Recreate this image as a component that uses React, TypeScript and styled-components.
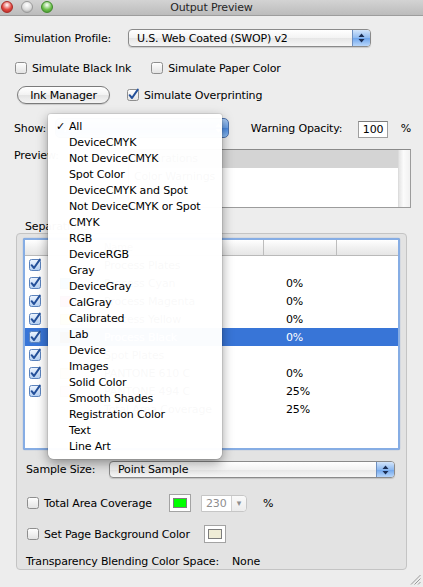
import React from "react";
import styled, { createGlobalStyle } from "styled-components";

const GlobalStyle = createGlobalStyle`
  html, body { margin: 0; padding: 0; }
  body {
    font-family: "DejaVu Sans", "Lucida Grande", sans-serif;
    font-size: 11px;
    letter-spacing: -0.15px;
    color: #000;
    background: #ededed;
  }
`;

const menuItems = [
  "All", "DeviceCMYK", "Not DeviceCMYK", "Spot Color", "DeviceCMYK and Spot",
  "Not DeviceCMYK or Spot", "CMYK", "RGB", "DeviceRGB", "Gray", "DeviceGray",
  "CalGray", "Calibrated", "Lab", "Device", "Images", "Solid Color",
  "Smooth Shades", "Registration Color", "Text", "Line Art",
];

type Plate = { name: string; swatch?: string; pct?: string; check: boolean; selected?: boolean };

const plates: Plate[] = [
  { name: "Process Plates", check: true },
  { name: "Process Cyan", swatch: "#00aeef", pct: "0%", check: true },
  { name: "Process Magenta", swatch: "#ec008c", pct: "0%", check: true },
  { name: "Process Yellow", swatch: "#fff200", pct: "0%", check: true },
  { name: "Process Black", swatch: "#231f20", pct: "0%", check: true, selected: true },
  { name: "Spot Plates", check: true },
  { name: "PANTONE 610 C", swatch: "#e1d85b", pct: "0%", check: true },
  { name: "PANTONE 494 C", swatch: "#f2afc1", pct: "25%", check: true },
  { name: "Total Area Coverage", pct: "25%", check: false },
];

const CheckBox = ({ checked, blue }: { checked?: boolean; blue?: boolean }) => (
  <svg width="12" height="12" viewBox="0 0 12 12" style={{ overflow: "visible", flex: "none" }}>
    <defs>
      <linearGradient id={blue ? "cbBlue" : "cbPlain"} x1="0" y1="0" x2="0" y2="1">
        <stop offset="0" stopColor={blue ? "#eef5ff" : "#ffffff"} />
        <stop offset="1" stopColor={blue ? "#b3cff2" : "#e2e2e2"} />
      </linearGradient>
    </defs>
    <rect
      x="0.5" y="0.5" width="11" height="11" rx="2"
      fill={`url(#${blue ? "cbBlue" : "cbPlain"})`}
      stroke={blue ? "#5b83bd" : "#8e8e8e"}
    />
    {checked && (
      <path d="M2.6 6.2 L5 9 L10.8 0.6" fill="none" stroke="#24509a" strokeWidth="2" strokeLinecap="round" strokeLinejoin="round" />
    )}
  </svg>
);

const Arrows = ({ dark }: { dark?: boolean }) => (
  <svg width="7" height="10" viewBox="0 0 7 10">
    <path d="M3.5 0.5 L6.5 4 L0.5 4 Z M0.5 6 L6.5 6 L3.5 9.5 Z" fill={dark ? "#1c2f55" : "#fff"} />
  </svg>
);

const App = () => {
  return (
    <Window>
      <GlobalStyle />
      <TitleBar>
        <Lights>
          <Light $color="#e2463f" $edge="#a82a25" />
          <Light $color="#dcdcdc" $edge="#9a9a9a" />
          <Light $color="#6cc04a" $edge="#3f8a2a" />
        </Lights>
        <Title>Output Preview</Title>
        <span />
      </TitleBar>

      <Body>
        <Row $top={13} $h={18}>
          <Label $w={114}>Simulation Profile:</Label>
          <PopUp $w={243} $h={18}>
            <PopText>U.S. Web Coated (SWOP) v2</PopText>
            <PopArrow><Arrows dark /></PopArrow>
          </PopUp>
        </Row>

        <Row $top={14} $h={14} $gap={20}>
          <CheckItem $indent={1}>
            <CheckBox />
            <span>Simulate Black Ink</span>
          </CheckItem>
          <CheckItem>
            <CheckBox />
            <span>Simulate Paper Color</span>
          </CheckItem>
        </Row>

        <Row $top={11} $h={18} $gap={17}>
          <PushButton>Ink Manager</PushButton>
          <CheckItem>
            <CheckBox checked />
            <span>Simulate Overprinting</span>
          </CheckItem>
        </Row>

        <Row $top={14} $h={20}>
          <Label $w={41}>Show:</Label>
          <BluePopUp>
            <PopText $light>All</PopText>
            <Arrows />
          </BluePopUp>
          <Label $w={107} style={{ marginLeft: 22 }}>Warning Opacity:</Label>
          <NumberField>100</NumberField>
          <Unit $left={13}>%</Unit>
        </Row>

        <PreviewRow>
          <Label $w={114}>Preview:</Label>
          <ListBox>
            <ListRows>
              <ListRow $active>Separations</ListRow>
              <ListRow>Color Warnings</ListRow>
            </ListRows>
            <ScrollTrack />
          </ListBox>
        </PreviewRow>

        <GroupTitle>Separations</GroupTitle>
        <GroupBox>
          <TableFrame>
            <TableHead>
              <HeadCell>Name</HeadCell>
              <HeadCell $sep />
              <HeadCell $sep />
            </TableHead>
            {plates.map((p) => (
              <TableRow key={p.name} $selected={p.selected}>
                <NameCell>
                  <CheckCell>{p.check && <CheckBox checked blue />}</CheckCell>
                  <SwatchCell>{p.swatch && <Swatch $color={p.swatch} />}</SwatchCell>
                  <span>{p.name}</span>
                </NameCell>
                <PctCell>{p.pct}</PctCell>
                <div />
              </TableRow>
            ))}
          </TableFrame>

          <Controls>
            <Row $top={11} $h={17}>
              <Label $w={83}>Sample Size:</Label>
              <PopUp $w={286} $h={17}>
                <PopText>Point Sample</PopText>
                <PopArrow><Arrows dark /></PopArrow>
              </PopUp>
            </Row>

            <Row $top={16} $h={18}>
              <CheckItem $indent={1} $w={142}>
                <CheckBox />
                <span>Total Area Coverage</span>
              </CheckItem>
              <ColorWell $fill="#00ff00" />
              <Combo>
                <ComboText>230</ComboText>
                <ComboButton>▾</ComboButton>
              </Combo>
              <Unit $left={16}>%</Unit>
            </Row>

            <Row $top={13} $h={18}>
              <CheckItem $indent={1} $w={177}>
                <CheckBox />
                <span>Set Page Background Color</span>
              </CheckItem>
              <ColorWell $fill="#efecd6" />
            </Row>

            <Row $top={11} $h={14}>
              <Label $w={206}>Transparency Blending Color Space:</Label>
              <span>None</span>
            </Row>
          </Controls>
        </GroupBox>
      </Body>

      <Menu>
        {menuItems.map((item, i) => (
          <MenuItem key={item}>
            {i === 0 && <Tick>✓</Tick>}
            {item}
          </MenuItem>
        ))}
      </Menu>

      <Grip width="11" height="11" viewBox="0 0 11 11">
        <path d="M10.5 1 L1 10.5 M10.5 4.5 L4.5 10.5 M10.5 8 L8 10.5" stroke="#9a9a9a" strokeWidth="1" />
      </Grip>
    </Window>
  );
};

export default App;

const Window = styled.div`
  position: relative;
  width: 423px;
  height: 587px;
  overflow: hidden;
  background: #ededed;
`;

const TitleBar = styled.div`
  height: 15px;
  display: grid;
  grid-template-columns: 1fr auto 1fr;
  align-items: center;
  background: linear-gradient(#d3d3d3, #bcbcbc);
  border-bottom: 1px solid #9d9d9d;
`;

const Lights = styled.div`
  display: flex;
  gap: 8px;
  padding-left: 1px;
  margin-top: -2px;
`;

const Light = styled.div<{ $color: string; $edge: string }>`
  width: 12px;
  height: 12px;
  border-radius: 50%;
  box-sizing: border-box;
  border: 1px solid ${(p) => p.$edge};
  background: radial-gradient(circle at 50% 30%, #ffffff 0%, ${(p) => p.$color} 55%, ${(p) => p.$edge} 100%);
`;

const Title = styled.div`
  font-size: 11px;
  color: #262626;
`;

const Body = styled.div`
  padding: 0 12px 0 14px;
  display: flex;
  flex-direction: column;
`;

const Row = styled.div<{ $top: number; $h: number; $gap?: number }>`
  display: flex;
  align-items: center;
  margin-top: ${(p) => p.$top}px;
  height: ${(p) => p.$h}px;
  gap: ${(p) => p.$gap ?? 0}px;
  white-space: nowrap;
`;

const Label = styled.div<{ $w: number }>`
  width: ${(p) => p.$w}px;
  flex: none;
  white-space: nowrap;
`;

const PopUp = styled.div<{ $w: number; $h: number }>`
  width: ${(p) => p.$w}px;
  height: ${(p) => p.$h}px;
  box-sizing: border-box;
  display: flex;
  align-items: stretch;
  justify-content: space-between;
  border: 1px solid #8a8a8a;
  border-radius: 4px;
  background: linear-gradient(#ffffff, #f3f3f3 50%, #e6e6e6 51%, #f6f6f6);
  box-shadow: 0 1px 1px rgba(0, 0, 0, 0.15);
  overflow: hidden;
`;

const PopText = styled.span<{ $light?: boolean }>`
  padding-left: 8px;
  align-self: center;
  color: ${(p) => (p.$light ? "#fff" : "#000")};
`;

const PopArrow = styled.span`
  width: 17px;
  display: flex;
  align-items: center;
  justify-content: center;
  border-left: 1px solid #6d8fc0;
  background: linear-gradient(#d3e5fb, #8fbaf0 50%, #6ea5ec 51%, #b8d6fa);
`;

const BluePopUp = styled.div`
  width: 175px;
  height: 20px;
  box-sizing: border-box;
  display: flex;
  align-items: center;
  justify-content: space-between;
  padding-right: 6px;
  border: 1px solid #4d73ad;
  border-radius: 5px;
  background: linear-gradient(#aacbf4, #6aa2ea 50%, #4a8ae2 51%, #8fc0f7);
`;

const CheckItem = styled.label<{ $indent?: number; $w?: number }>`
  display: flex;
  align-items: center;
  gap: 5px;
  margin-left: ${(p) => p.$indent ?? 0}px;
  width: ${(p) => (p.$w ? `${p.$w}px` : "auto")};
  flex: none;
  white-space: nowrap;
`;

const PushButton = styled.button`
  margin-left: 3px;
  width: 93px;
  height: 18px;
  padding: 0;
  border: 1px solid #7b7b7b;
  border-radius: 9px;
  background: linear-gradient(#ffffff, #f2f2f2 50%, #e3e3e3 51%, #f4f4f4);
  box-shadow: 0 1px 1px rgba(0, 0, 0, 0.15);
  font: inherit;
  letter-spacing: inherit;
  color: #000;
`;

const NumberField = styled.div`
  width: 30px;
  height: 17px;
  box-sizing: border-box;
  margin-top: 3px;
  padding-left: 4px;
  line-height: 15px;
  background: #fff;
  border: 1px solid #9f9f9f;
  border-top-color: #7c7c7c;
`;

const Unit = styled.span<{ $left: number }>`
  margin-left: ${(p) => p.$left}px;
`;

const PreviewRow = styled.div`
  display: flex;
  margin-top: 11px;
  height: 59px;
  line-height: 14px;
`;

const ListBox = styled.div`
  width: 283px;
  height: 59px;
  box-sizing: border-box;
  display: flex;
  background: #fff;
  border: 1px solid #9c9c9c;
  border-top-color: #8a8a8a;
`;

const ListRows = styled.div`
  flex: 1;
`;

const ListRow = styled.div<{ $active?: boolean }>`
  height: 18px;
  line-height: 18px;
  padding-left: 5px;
  background: ${(p) => (p.$active ? "#d4d4d4" : "transparent")};
`;

const ScrollTrack = styled.div`
  width: 11px;
  background: linear-gradient(to right, #e4e4e4, #fbfbfb 40%, #f1f1f1);
  border-left: 1px solid #dcdcdc;
`;

const GroupTitle = styled.div`
  margin-top: 12px;
  padding-left: 11px;
  height: 13px;
  line-height: 13px;
`;

const GroupBox = styled.div`
  margin-left: 2px;
  width: 391px;
  height: 337px;
  box-sizing: border-box;
  padding: 4px 6px 0;
  background: #e3e3e3;
  border: 1px solid #c4c4c4;
  border-radius: 4px;
`;

const TableFrame = styled.div`
  width: 377px;
  height: 212px;
  box-sizing: border-box;
  border: 2px solid #86ade4;
  border-radius: 2px;
  background: #fff;
  box-shadow: 0 0 1px #5a86c8;
`;

const columns = "238px 73px 1fr";

const TableHead = styled.div`
  height: 15px;
  display: grid;
  grid-template-columns: ${columns};
  background: linear-gradient(#ffffff, #f1f1f1 50%, #e6e6e6);
  border-bottom: 1px solid #b9b9b9;
`;

const HeadCell = styled.div<{ $sep?: boolean }>`
  border-left: ${(p) => (p.$sep ? "1px solid #bdbdbd" : "none")};
  padding-left: 79px;
  line-height: 15px;
  color: #444;
  font-size: 10px;
`;

const TableRow = styled.div<{ $selected?: boolean }>`
  height: 18px;
  display: grid;
  grid-template-columns: ${columns};
  align-items: center;
  background: ${(p) => (p.$selected ? "#3875d7" : "transparent")};
  color: ${(p) => (p.$selected ? "#fff" : "#000")};
`;

const NameCell = styled.div`
  display: grid;
  grid-template-columns: 35px 44px 1fr;
  align-items: center;
`;

const CheckCell = styled.div`
  display: flex;
  padding-left: 4px;
`;

const SwatchCell = styled.div`
  display: flex;
`;

const Swatch = styled.div<{ $color: string }>`
  width: 11px;
  height: 11px;
  background: ${(p) => p.$color};
  border: 1px solid rgba(0, 0, 0, 0.25);
  box-sizing: border-box;
`;

const PctCell = styled.div`
  padding-left: 23px;
`;

const Controls = styled.div`
  padding-left: 3px;
  display: flex;
  flex-direction: column;
`;

const ColorWell = styled.div<{ $fill: string }>`
  width: 22px;
  height: 18px;
  box-sizing: border-box;
  padding: 3px;
  background: #fff;
  border: 1px solid #a3a3a3;
  flex: none;

  &::after {
    content: "";
    display: block;
    height: 100%;
    box-sizing: border-box;
    background: ${(p) => p.$fill};
    border: 1px solid #7d7d7d;
  }
`;

const Combo = styled.div`
  margin-left: 10px;
  width: 46px;
  height: 17px;
  box-sizing: border-box;
  display: flex;
  border: 1px solid #c6c6c6;
  border-radius: 0 4px 4px 0;
  background: #fff;
`;

const ComboText = styled.span`
  flex: 1;
  padding-left: 4px;
  line-height: 15px;
  color: #8e8e8e;
`;

const ComboButton = styled.span`
  width: 14px;
  text-align: center;
  line-height: 15px;
  font-size: 9px;
  color: #8e8e8e;
  border-left: 1px solid #d0d0d0;
  background: linear-gradient(#fafafa, #ececec);
  border-radius: 0 4px 4px 0;
`;

const Menu = styled.div`
  position: absolute;
  left: 48px;
  top: 114px;
  width: 174px;
  padding: 5px 0 4px;
  background: rgba(255, 255, 255, 0.975);
  border-radius: 3px 3px 6px 6px;
  box-shadow: 0 0 0 1px rgba(0, 0, 0, 0.08), 0 4px 12px rgba(0, 0, 0, 0.4);
`;

const MenuItem = styled.div`
  position: relative;
  height: 16px;
  line-height: 16px;
  padding-left: 21px;
  white-space: nowrap;
`;

const Tick = styled.span`
  position: absolute;
  left: 8px;
  top: 0;
`;

const Grip = styled.svg`
  position: absolute;
  right: 2px;
  bottom: 2px;
`;
